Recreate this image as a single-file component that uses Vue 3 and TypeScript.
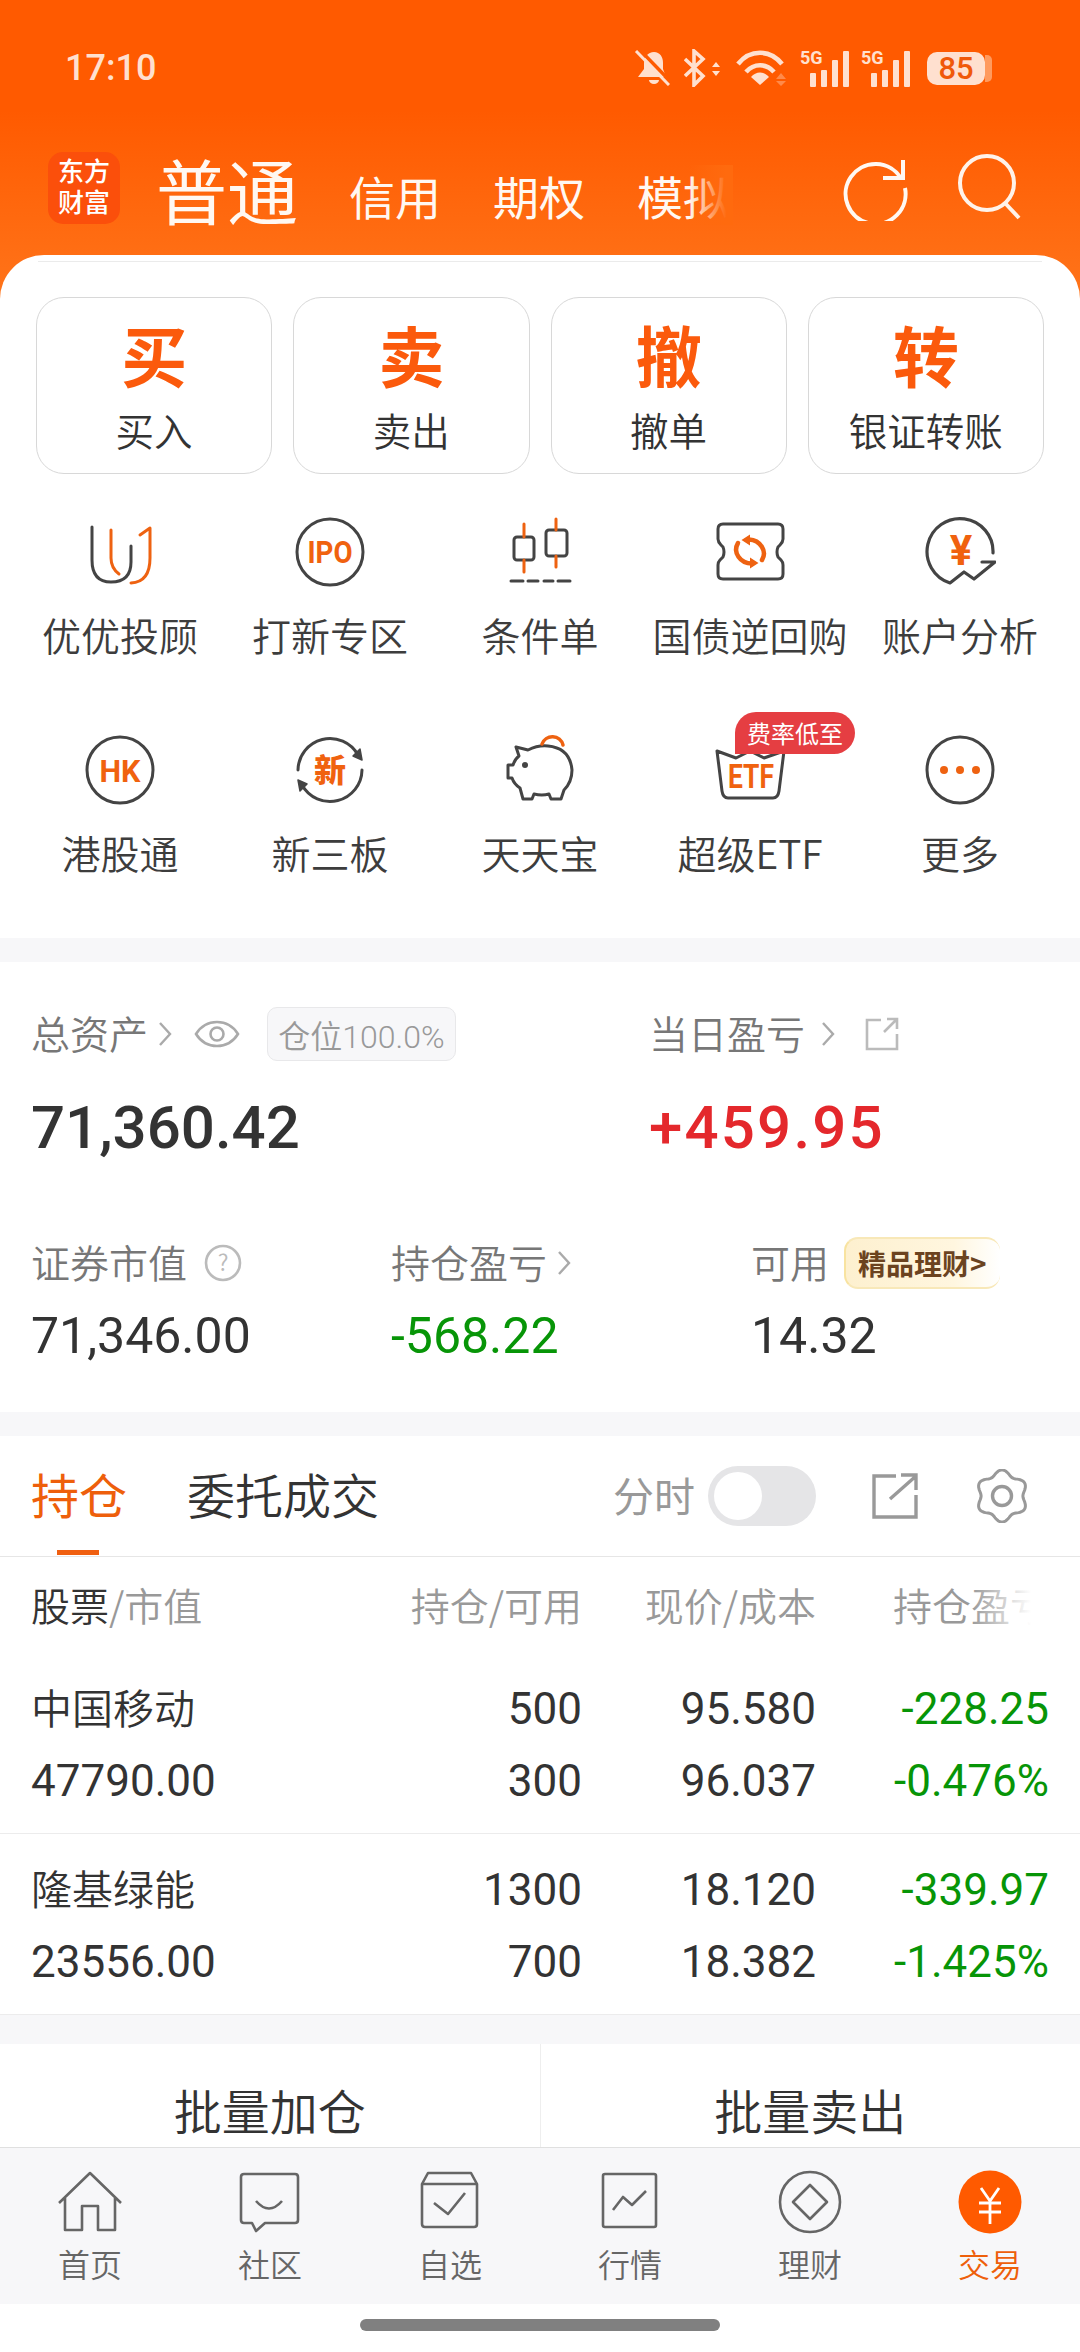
<script setup lang="ts">
const actions = [
  { big: '买', label: '买入' },
  { big: '卖', label: '卖出' },
  { big: '撤', label: '撤单' },
  { big: '转', label: '银证转账' },
]
const menu = [
  { id: 'u', label: '优优投顾' },
  { id: 'ipo', label: '打新专区' },
  { id: 'cond', label: '条件单' },
  { id: 'bond', label: '国债逆回购' },
  { id: 'acct', label: '账户分析' },
  { id: 'hk', label: '港股通' },
  { id: 'new', label: '新三板' },
  { id: 'pig', label: '天天宝' },
  { id: 'etf', label: '超级ETF' },
  { id: 'more', label: '更多' },
]
const rows = [
  { name: '中国移动', value: '47790.00', a: '500', b: '300', c: '95.580', d: '96.037', e: '-228.25', f: '-0.476%' },
  { name: '隆基绿能', value: '23556.00', a: '1300', b: '700', c: '18.120', d: '18.382', e: '-339.97', f: '-1.425%' },
]
const nav = [
  { id: 'home', label: '首页' },
  { id: 'comm', label: '社区' },
  { id: 'fav', label: '自选' },
  { id: 'mkt', label: '行情' },
  { id: 'fin', label: '理财' },
  { id: 'trade', label: '交易' },
]
function gearPath(): string {
  const pts: string[] = []
  for (let i = 0; i < 120; i++) {
    const t = (i / 120) * Math.PI * 2
    const r = 23.5 + 2.6 * Math.cos(6 * (t + Math.PI / 6))
    pts.push(`${(27 + r * Math.cos(t)).toFixed(2)} ${(27 + r * Math.sin(t)).toFixed(2)}`)
  }
  return 'M' + pts.join('L') + 'Z'
}
const gear = gearPath()
</script>

<template>
  <div class="page">
    <div class="main">
      <div class="top">
        <div class="status">
          <span class="time">17:10</span>
          <div class="status-icons">
            <svg class="s-bell" width="36" height="36" viewBox="0 0 36 36">
              <path d="M20 2c-6 0-10 5-10 11v6l-6 8h28l-3-8v-6c0-6-3-11-9-11z" fill="#ffe0cf" />
              <path d="M15 30a5 4 0 0 0 10 0z" fill="#ffe0cf" />
              <path d="M5 -1l33 34" stroke="#ff5a00" stroke-width="3.5" />
              <path d="M2 1l33 34" stroke="#ffe0cf" stroke-width="3" />
            </svg>
            <svg class="s-bt" width="36" height="38" viewBox="0 0 36 38">
              <path d="M1 10L19 27L10 36V2L19 10L1 27" fill="none" stroke="#ffe0cf" stroke-width="3.6" />
              <path d="M32 13l-4 5h8zM32 27l-4-5h8z" fill="#ffe0cf" />
            </svg>
            <svg class="s-wifi" width="52" height="36" viewBox="0 0 52 36">
              <path d="M2 14C14 -1 34 -1 46 14M10 22C18 13 30 13 38 22" fill="none" stroke="#ffe0cf" stroke-width="4.6" />
              <path d="M24 35L15 27C20 21 28 21 33 27Z" fill="#ffe0cf" />
              <path d="M45 23l-5 6h10zM45 36l-5-5h10z" fill="#ff8a4a" />
            </svg>
            <div class="sig" v-for="n in 2" :key="n">
              <span class="g5">5G</span>
              <i class="bar b1"></i><i class="bar b2"></i><i class="bar b3"></i><i class="bar b4"></i>
            </div>
            <div class="batt"><span>85</span></div>
          </div>
        </div>
        <div class="acct-tabs">
          <div class="logo">东方<br />财富</div>
          <span class="at active">普通</span>
          <span class="at">信用</span>
          <span class="at">期权</span>
          <span class="at">模拟<i class="fade"></i></span>
          <div class="grow"></div>
          <svg class="refresh" width="66" height="66" viewBox="0 0 66 66" fill="none" stroke="#fff8f2" stroke-width="4">
            <path d="M59 23A30 30 0 1 0 63 33" />
            <path d="M61 5V23H41" />
          </svg>
          <svg class="search" width="66" height="66" viewBox="0 0 66 66" fill="none" stroke="#fff3ea" stroke-width="4">
            <circle cx="31" cy="29" r="27" />
            <path d="M49 49l14 15" />
          </svg>
        </div>
        <div class="card">
          <div class="quick">
            <div class="qbtn" v-for="a in actions" :key="a.big">
              <span class="qbig">{{ a.big }}</span>
              <span class="qlabel">{{ a.label }}</span>
            </div>
          </div>
          <div class="menu">
            <div class="mi" v-for="m in menu" :key="m.id">
              <span v-if="m.id === 'etf'" class="badge">费率低至</span>
              <svg width="72" height="72" viewBox="0 0 72 72" fill="none" stroke="#444" stroke-width="3" stroke-linecap="round" stroke-linejoin="round">
                <g v-if="m.id === 'u'">
                  <path d="M8 11V44Q8 66 27 66Q47 66 47 46V30" />
                  <path d="M27 14V42Q27 52 35 58" class="o" />
                  <path d="M56 19L66 12V42Q66 66 47 67" class="o" />
                </g>
                <g v-else-if="m.id === 'ipo'">
                  <circle cx="36" cy="36" r="33" />
                  <text x="36" y="47" class="ti" font-size="31" textLength="45" lengthAdjust="spacingAndGlyphs">IPO</text>
                </g>
                <g v-else-if="m.id === 'cond'">
                  <rect x="10" y="21" width="20" height="23" rx="3" />
                  <rect x="42" y="14" width="21" height="26" rx="3" />
                  <path d="M20 8V21M20 44V56M52 3V14M52 40V51" class="o" />
                  <path d="M7 65H19M24 65H34M40 65H49M54 65H66" />
                </g>
                <g v-else-if="m.id === 'bond'">
                  <path d="M9 8H64Q69 8 69 13V23Q69 26 66 29L64 31Q62 36 64 41L67 44Q69 46 69 49V58Q69 63 64 63H9Q4 63 4 58V49Q4 46 6 44L9 41Q11 36 9 31L7 29Q4 26 4 23V13Q4 8 9 8Z" />
                  <path d="M35 23.5A16 14 0 0 1 48 44" class="o" stroke-width="4.5" />
                  <path d="M38 47.5A16 14 0 0 1 24 27" class="o" stroke-width="4.5" />
                  <path d="M27.5 24L36 18.5V29.5ZM44.5 47L36 41.5V52.5Z" class="of" />
                </g>
                <g v-else-if="m.id === 'acct'">
                  <path d="M69 37A33 33 0 1 0 26 67L40 56L50 63L71 46H58" stroke-width="3.2" />
                  <text x="37" y="49" class="ti" font-size="42">¥</text>
                </g>
                <g v-else-if="m.id === 'hk'">
                  <circle cx="36" cy="36" r="33" />
                  <text x="36" y="47.5" class="ti" font-size="32" textLength="41" lengthAdjust="spacingAndGlyphs">HK</text>
                </g>
                <g v-else-if="m.id === 'new'">
                  <path d="M4 36A32 32 0 0 1 64 21" />
                  <path d="M68 36A32 32 0 0 1 8 51" />
                  <path d="M68 26L59 22L66 15ZM4 46L13 50L6 57Z" fill="#444" stroke-width="1.5" />
                  <text x="36" y="48" class="ti zh" font-size="32">新</text>
                </g>
                <g v-else-if="m.id === 'pig'">
                  <path d="M12 13L24 16Q34 11 44 12Q66 14 68 36Q68 48 60 56L57 65H47L45 60Q38 62 30 60L28 65H19L16 54Q10 50 8 44H4V31H9Q11 25 15 22Z" />
                  <circle cx="21" cy="31" r="3" fill="#444" stroke="none" />
                  <path d="M38 10A11 11 0 0 1 59 11" class="o" stroke-width="3.5" />
                </g>
                <g v-else-if="m.id === 'etf'">
                  <path d="M3 17L22 24L36 17L50 24L70 17L65 57Q64 64 59 64H14Q9 64 8 57Z" />
                  <text x="37" y="53.5" class="ti" font-size="33" textLength="46" lengthAdjust="spacingAndGlyphs">ETF</text>
                </g>
                <g v-else>
                  <circle cx="36" cy="36" r="33" />
                  <circle cx="20" cy="36" r="4" class="of" />
                  <circle cx="36" cy="36" r="4" class="of" />
                  <circle cx="52" cy="36" r="4" class="of" />
                </g>
              </svg>
              <span class="ml">{{ m.label }}</span>
            </div>
          </div>
        </div>
      </div>

      <div class="assets">
        <div class="a-row1">
          <div class="a-left">
            <div class="lbl">
              <span class="tx">总资产</span>
              <svg class="chev" width="18" height="28" viewBox="0 0 18 28"><path d="M4 3l10 11L4 25" /></svg>
              <svg class="eye" width="46" height="32" viewBox="0 0 46 32" fill="none" stroke="#aaa" stroke-width="2.6">
                <path d="M2 16C12 0 34 0 44 16C34 32 12 32 2 16Z" />
                <circle cx="23" cy="16" r="6.5" />
              </svg>
              <span class="pill">仓位100.0%</span>
            </div>
            <div class="big">71,360.42</div>
          </div>
          <div class="a-right">
            <div class="lbl">
              <span class="tx">当日盈亏</span>
              <svg class="chev chev-wide" width="18" height="28" viewBox="0 0 18 28"><path d="M4 3l10 11L4 25" /></svg>
              <svg class="ext" width="36" height="36" viewBox="0 0 36 36" fill="none" stroke="#bbb" stroke-width="2.6">
                <path d="M17 4H3V33H33V18M20 16L33 3M23 3H33V13" />
              </svg>
            </div>
            <div class="big red">+459.95</div>
          </div>
        </div>
        <div class="a-row2">
          <div class="c">
            <div class="lbl">
              <span class="tx">证券市值</span>
              <svg class="q" width="38" height="38" viewBox="0 0 38 38">
                <circle cx="19" cy="19" r="17" fill="none" stroke="#bbb" stroke-width="2.6" />
                <text x="19" y="27" text-anchor="middle" font-size="23" fill="#bbb">?</text>
              </svg>
            </div>
            <div class="val">71,346.00</div>
          </div>
          <div class="c">
            <div class="lbl">
              <span class="tx">持仓盈亏</span>
              <svg class="chev" width="18" height="28" viewBox="0 0 18 28"><path d="M4 3l10 11L4 25" /></svg>
            </div>
            <div class="val green">-568.22</div>
          </div>
          <div class="c">
            <div class="lbl">
              <span class="tx">可用</span>
              <span class="jp">精品理财&gt;</span>
            </div>
            <div class="val">14.32</div>
          </div>
        </div>
      </div>

      <div class="holdings">
        <div class="h-tabs">
          <span class="ht on">持仓<i class="ul"></i></span>
          <span class="ht">委托成交</span>
          <div class="grow"></div>
          <span class="fs">分时</span>
          <span class="toggle"><i></i></span>
          <svg class="h-ext" width="46" height="46" viewBox="0 0 46 46" fill="none" stroke="#999" stroke-width="3.4">
            <path d="M24 3H2V44H44V22M18 26L44 3M29 2H44V17" />
          </svg>
          <svg class="h-gear" width="54" height="54" viewBox="0 0 54 54" fill="none" stroke="#999" stroke-width="3">
            <path :d="gear" />
            <circle cx="27" cy="27" r="9.5" stroke-width="3.4" />
          </svg>
        </div>
        <div class="thead">
          <span><b>股票</b>/市值</span>
          <span class="r">持仓/可用</span>
          <span class="r">现价/成本</span>
          <span class="r last">持仓盈亏<i class="fade2"></i></span>
        </div>
        <div class="trow" v-for="r in rows" :key="r.name">
          <div class="cell"><span class="name">{{ r.name }}</span><span>{{ r.value }}</span></div>
          <div class="cell r"><span>{{ r.a }}</span><span>{{ r.b }}</span></div>
          <div class="cell r"><span>{{ r.c }}</span><span>{{ r.d }}</span></div>
          <div class="cell r green"><span>{{ r.e }}</span><span>{{ r.f }}</span></div>
        </div>
      </div>

      <div class="batch">
        <div class="bb">批量加仓</div>
        <div class="bb">批量卖出</div>
      </div>
    </div>

    <div class="nav">
      <div class="ni" :class="{ act: n.id === 'trade' }" v-for="n in nav" :key="n.id">
        <svg width="64" height="64" viewBox="0 0 64 64" fill="none" stroke="#666" stroke-width="2.6" stroke-linejoin="round">
          <g v-if="n.id === 'home'">
            <path d="M1 33L32 3L63 33M7 27V60H24V36H40V60H57V27" />
          </g>
          <g v-else-if="n.id === 'comm'">
            <path d="M6 4H57Q60 4 60 7V50Q60 53 57 53H27L18 61L14 53H6Q3 53 3 50V7Q3 4 6 4Z" />
            <path d="M18 31Q31 46 44 31" />
          </g>
          <g v-else-if="n.id === 'fav'">
            <path d="M10 3H53L59 14V54Q59 57 56 57H7Q4 57 4 54V14ZM4 14H59" />
            <path d="M16 33L30 44L47 23" />
          </g>
          <g v-else-if="n.id === 'mkt'">
            <rect x="5" y="4" width="53" height="53" rx="2" />
            <path d="M15 40L25 27L34 35L48 21" />
          </g>
          <g v-else-if="n.id === 'fin'">
            <circle cx="32" cy="32" r="30" />
            <path d="M32 15L49 32L32 49L15 32Z" />
          </g>
          <g v-else>
            <circle cx="32" cy="32" r="31.5" fill="#ff5a00" stroke="none" />
            <path d="M23 18L32 31L41 18M21 33H43M21 42H43M32 31V54" stroke="#fff" stroke-width="2.8" />
          </g>
        </svg>
        <span>{{ n.label }}</span>
      </div>
    </div>
    <div class="home-bar"><i></i></div>
  </div>
</template>

<style>
html, body { margin: 0; background: #fff; }
</style>

<style scoped>
.page {
  width: 1080px;
  height: 2352px;
  display: flex;
  flex-direction: column;
  overflow: hidden;
  background: #f7f7f9;
  font-family: Roboto, "Noto Sans CJK SC", sans-serif;
  color: #333;
}
.main { flex: 1; min-height: 0; }
.grow { flex: 1; }
i { display: block; font-style: normal; }

.top {
  background: linear-gradient(#ff5a00 0, #ff5a00 110px, #ff7319 290px) no-repeat;
  background-size: 100% 300px;
}
.status {
  height: 136px;
  display: flex;
  align-items: center;
  justify-content: space-between;
  padding: 0 95px 0 65px;
  color: #ffe0cf;
}
.time { font-size: 36px; font-weight: 500; }
.status-icons { display: flex; align-items: center; }
.s-bt { margin-left: 14px; }
.s-wifi { margin-left: 16px; }
.sig { position: relative; width: 50px; height: 37px; margin-left: 11px; display: flex; align-items: flex-end; justify-content: flex-end; gap: 5px; }
.g5 { position: absolute; left: 1px; top: -1px; font-size: 18px; font-weight: 700; line-height: 18px; }
.bar { width: 6px; background: #ffe0cf; border-radius: 1px; }
.b1 { height: 14px; } .b2 { height: 17px; } .b3 { height: 27px; } .b4 { height: 36px; }
.batt {
  width: 58px; height: 33px; margin-left: 17px; border-radius: 10px;
  background: #ffe0cf; color: #f0590a; font-size: 31px; font-weight: 500;
  display: flex; align-items: center; justify-content: center; position: relative;
}
.batt::after {
  content: ""; position: absolute; right: -7px; top: 3px; width: 7px; height: 27px;
  background: #ff9a5e; border-radius: 0 5px 5px 0;
}
.acct-tabs {
  height: 104px;
  padding: 0 58px 0 48px;
  display: flex;
  align-items: center;
  color: #fff8f2;
  margin-bottom: 15px;
}
.logo {
  width: 72px; height: 72px; border-radius: 15px; background: #fb4f0b;
  text-align: center; padding-top: 5px; box-sizing: border-box;
  font-size: 26px; line-height: 31px; color: #fff; font-weight: 500;
  margin-right: 36px; flex: none;
}
.at {
  font-family: "Noto Sans CJK SC", sans-serif;
  font-size: 46px; line-height: 60px; margin-right: 52px; position: relative;
  margin-top: 14px;
}
.at.active { font-size: 71px; line-height: 84px; margin-top: 0; margin-right: 51px; }
.fade {
  position: absolute; right: -4px; top: 0; bottom: 0; width: 44px;
  background: linear-gradient(to right, rgba(255,106,14,0), #ff6a0e 85%);
}
.refresh { margin-right: 48px; margin-top: -1px; }
.search { margin-top: -3px; }
.card { background: #fff; border-radius: 44px 44px 0 0; padding-top: 42px; position: relative; }
.card::before { content: ""; position: absolute; left: 38px; right: 38px; top: 6px; height: 1px; background: #ebebeb; }
.quick { display: flex; gap: 21px; padding: 0 36px; }
.qbtn {
  flex: 1; height: 177px; box-sizing: border-box; border: 1.5px solid #d8d8d8; border-radius: 28px;
  display: flex; flex-direction: column; align-items: center;
  font-family: "Noto Sans CJK SC", sans-serif;
}
.qbig { font-size: 66px; font-weight: 700; color: #fb5a0c; line-height: 78px; margin-top: 16px; }
.qlabel { font-size: 38.5px; line-height: 50px; margin-top: 12px; color: #333; font-weight: 350; white-space: nowrap; }
.menu {
  display: grid;
  grid-template-columns: repeat(5, 210px);
  row-gap: 75px;
  padding: 42px 15px 61px;
}
.mi { display: flex; flex-direction: column; align-items: center; position: relative; }
.ml { font-family: "Noto Sans CJK SC", sans-serif; font-size: 39px; line-height: 50px; margin-top: 21px; color: #3d3d3d; font-weight: 350; white-space: nowrap; }
.badge {
  position: absolute; left: 90px; top: -22px; width: 120px; height: 42px; z-index: 1;
  border-radius: 21px 21px 21px 0; background: #e53e42; color: #fff;
  font-size: 24px; line-height: 42px; text-align: center; font-family: "Noto Sans CJK SC", sans-serif;
}
.o { stroke: #ee6211; }
.of { fill: #ee6211; stroke: none; }
.ti {
  fill: #f0620f; stroke: none; font-weight: 700; text-anchor: middle;
  font-family: Roboto, sans-serif;
}
.ti.zh { font-family: "Noto Sans CJK SC", sans-serif; font-weight: 900; }

.assets { margin-top: 24px; background: #fff; height: 450px; box-sizing: border-box; padding: 47px 31px 0; }
.a-row1 { display: flex; }
.a-left { width: 618px; flex: none; }
.lbl {
  height: 50px; display: flex; align-items: center;
  font-family: "Noto Sans CJK SC", sans-serif;
  font-size: 39px; color: #777; font-weight: 350; white-space: nowrap;
}
.tx { position: relative; top: -2px; }
.chev { margin-left: 8px; fill: none; stroke: #aaa; stroke-width: 2.4; flex: none; }
.chev-wide { margin-left: 14px; }
.eye { margin-left: 20px; flex: none; }
.pill {
  margin-left: 27px; width: 189px; height: 54px; box-sizing: border-box; flex: none;
  background: #f7f7f9; border: 1px solid #e8e8ea; border-radius: 10px;
  display: flex; align-items: center; justify-content: center;
  font-size: 32px; color: #999; font-family: Roboto, "Noto Sans CJK SC", sans-serif;
}
.ext { margin-left: 27px; flex: none; }
.big { font-size: 60px; font-weight: 500; line-height: 70px; margin-top: 34px; }
.red { color: #e4282c; letter-spacing: 2.2px; }
.green { color: #079507; }
.a-row2 { display: flex; margin-top: 75px; }
.c { width: 360px; flex: none; }
.q { margin-left: 17px; flex: none; }
.jp {
  margin-left: 15px; width: 156px; height: 52px; box-sizing: border-box; border-radius: 14px; flex: none;
  background: linear-gradient(to right, #fdf0cf, #fff6df 70%, #fff);
  border-left: 2px solid #f8e3a0; border-top: 2px solid #f8e8b8; border-bottom: 2px solid #f8e8b8;
  color: #6b431f; font-size: 28px; font-weight: 700; display: flex; align-items: center; padding-left: 12px;
  white-space: nowrap; overflow: hidden;
}
.val { font-size: 50px; line-height: 60px; margin-top: 18px; color: #333; }
.val.green { color: #079507; }

.holdings { margin-top: 24px; background: #fff; }
.h-tabs {
  height: 120px; display: flex; align-items: center; padding: 0 51px 0 31px;
  border-bottom: 1.5px solid #e6e6e6; font-family: "Noto Sans CJK SC", sans-serif;
}
.ht { font-size: 48px; line-height: 60px; margin-right: 60px; position: relative; top: -3px; color: #333; font-weight: 350; }
.ht.on { color: #ee5f0b; font-weight: 400; }
.ul { position: absolute; left: 26px; width: 42px; height: 5px; background: #f05f10; top: 87px; }
.fs { font-size: 41px; color: #999; margin-right: 13px; position: relative; top: -2px; }
.toggle { width: 108px; height: 60px; border-radius: 30px; background: #e5e5e7; display: flex; align-items: center; padding-left: 6px; box-sizing: border-box; margin-right: 56px; }
.toggle i { width: 48px; height: 48px; border-radius: 50%; background: #fff; }
.h-ext { margin-right: 57px; }
.thead, .trow {
  display: grid;
  grid-template-columns: 351px 200px 234px 233px;
  padding: 0 31px;
}
.thead { height: 100px; align-items: center; font-family: "Noto Sans CJK SC", sans-serif; font-size: 39px; color: #999; font-weight: 350; }
.thead span { position: relative; top: -3px; }
.thead b { font-weight: 350; color: #333; }
.r { text-align: right; }
.last { position: relative; }
.fade2 { position: absolute; right: -2px; top: 0; bottom: 0; width: 80px; background: linear-gradient(to right, rgba(255,255,255,0), #fff 75%); }
.trow { padding-top: 16px; padding-bottom: 16px; border-bottom: 1.5px solid #ececec; font-size: 44px; line-height: 72px; color: #333; }
.trow + .trow { padding-top: 20px; }
.cell { display: flex; flex-direction: column; }
.cell.green { color: #079507; }
.name { font-family: "Noto Sans CJK SC", sans-serif; font-size: 41px; font-weight: 350; position: relative; top: -3px; }
.batch { margin-top: 29px; height: 103px; background: #fff; display: flex; }
.bb {
  flex: 1; display: flex; align-items: flex-end; justify-content: center;
  font-size: 48px; line-height: 60px; padding-bottom: 3px; color: #333; font-weight: 350;
}
.bb + .bb { border-left: 1px solid #eee; }
.nav {
  height: 157px; box-sizing: border-box; border-top: 1.5px solid #e0e0e0;
  background: #f7f7f9; display: flex; padding-top: 22px; position: relative;
}
.ni {
  flex: 1; display: flex; flex-direction: column; align-items: center;
  font-family: "Noto Sans CJK SC", sans-serif; font-size: 32px; line-height: 44px; color: #666; font-weight: 350;
}
.ni span { margin-top: 7px; }
.ni.act { color: #ee5f0b; }
.home-bar { height: 48px; background: #fff; display: flex; justify-content: center; padding-top: 15px; box-sizing: border-box; }
.home-bar i { width: 360px; height: 12px; border-radius: 6px; background: #808080; }
</style>
